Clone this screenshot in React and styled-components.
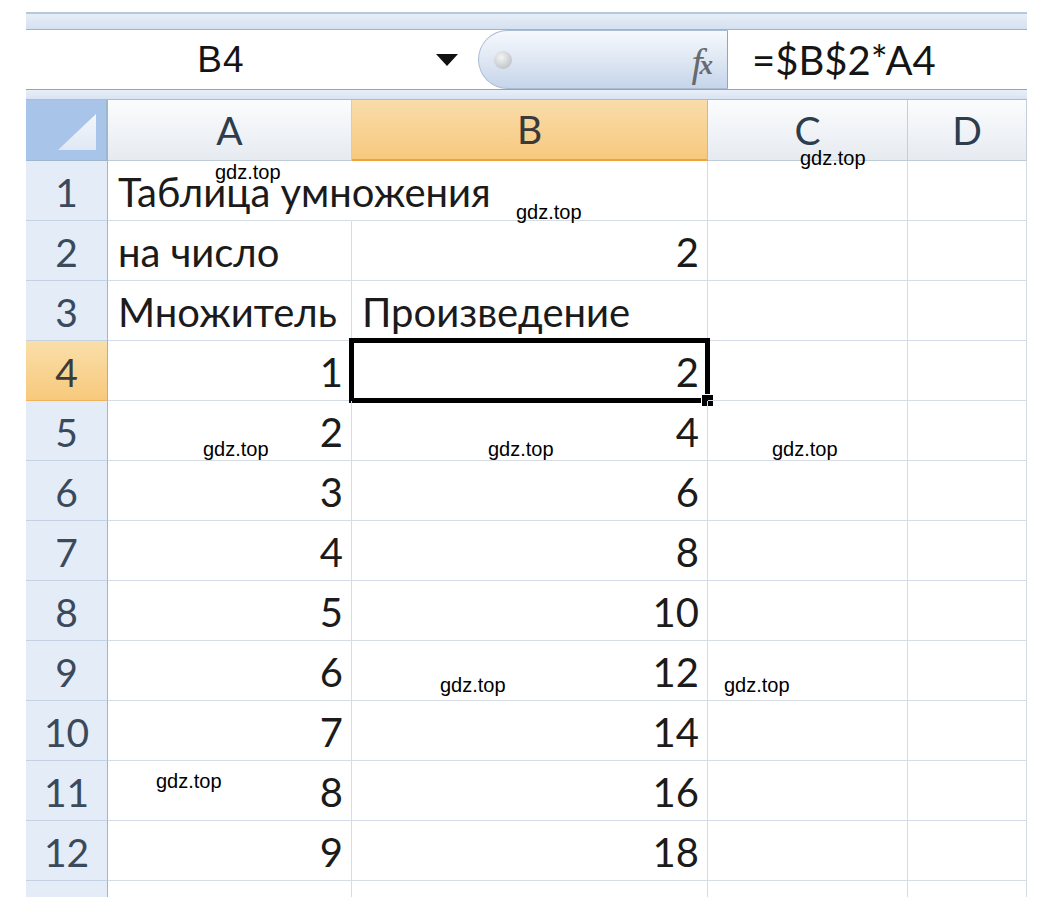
import React from 'react';
import styled, { createGlobalStyle, css } from 'styled-components';

const Global = createGlobalStyle`
  html, body { margin: 0; padding: 0; background: #fff; }
  body { overflow: hidden; }
`;

const Page = styled.div`
  position: relative;
  width: 1040px;
  height: 897px;
  overflow: hidden;
  box-sizing: border-box;
  padding: 12px 13px 0 26px;
  background: #fff;
  font-family: Lato, "Noto Sans", sans-serif;
`;

const Window = styled.div`
  display: flex;
  flex-direction: column;
  width: 1001px;
`;

const TopBand = styled.div`
  height: 18px;
  box-sizing: border-box;
  border-top: 2px solid #b6c8dc;
  border-bottom: 1px solid #9fb3cb;
  background: linear-gradient(#e6eef8, #d5e1f0);
`;

const FormulaBar = styled.div`
  display: flex;
  height: 59px;
  background: #fff;
`;

const NameBox = styled.div`
  width: 390px;
  display: flex;
  align-items: center;
  justify-content: center;
  font-family: "Liberation Sans", Arial, sans-serif;
  font-size: 37px;
  letter-spacing: 1px;
  color: #141414;
`;

const DropCell = styled.div`
  width: 62px;
  display: flex;
  align-items: center;
  justify-content: center;
`;

const FxButton = styled.div`
  position: relative;
  width: 250px;
  box-sizing: border-box;
  border-radius: 30px 0 0 30px;
  border: 1px solid #a9bcd3;
  border-right: 1px solid #8fa5c0;
  background: linear-gradient(#f6f9fd 0%, #e1e9f4 45%, #c6d5ea 100%);
  display: flex;
  align-items: center;
  justify-content: space-between;
  padding: 0 14px 0 15px;
`;

const Knob = styled.div`
  width: 18px;
  height: 18px;
  border-radius: 50%;
  background: radial-gradient(circle at 40% 35%, #f4f4f4, #c4c7cc 70%, #aeb3ba);
`;

const FxText = styled.div`
  font-family: "Liberation Serif", "DejaVu Serif", serif;
  font-style: italic;
  font-size: 40px;
  color: #66696e;
  line-height: 1;
  display: flex;
  align-items: flex-end;
  padding-top: 6px;
`;

const FxSub = styled.span`
  font-size: 27px;
  font-weight: bold;
  margin-left: -3px;
  margin-bottom: 4px;
`;

const FormulaInput = styled.div`
  flex: 1;
  display: flex;
  align-items: center;
  padding-left: 24px;
  font-size: 40px;
  color: #151515;
`;

const Separator = styled.div`
  height: 11px;
  box-sizing: border-box;
  border-top: 1px solid #8ea4bf;
  border-bottom: 1px solid #aabdd3;
  background: linear-gradient(#e8eff8, #d9e4f2);
`;

const Grid = styled.div`
  display: grid;
  grid-template-columns: 82px 244px 356px 200px 119px;
  grid-template-rows: 61px;
  grid-auto-rows: 60px;
`;

const Cell = styled.div`
  position: relative;
  box-sizing: border-box;
  display: flex;
  align-items: flex-end;
  justify-content: ${(p) => (p.$right ? 'flex-end' : 'flex-start')};
  padding: 0 8px 8px 10px;
  border-right: 1px solid ${(p) => (p.$noRight ? 'transparent' : '#d6dce5')};
  border-bottom: 1px solid #d6dce5;
  font-size: 40px;
  line-height: 40px;
  color: #1b1b1b;
  white-space: nowrap;
  z-index: ${(p) => (p.$overflow ? 1 : 0)};
`;

const RowHead = styled.div`
  box-sizing: border-box;
  display: flex;
  align-items: flex-end;
  justify-content: center;
  padding-bottom: 8px;
  font-size: 39px;
  line-height: 40px;
  color: #3a4a5c;
  border-right: 1px solid #9eb6ce;
  border-bottom: 1px solid #c3d1e3;
  background: #e4ecf7;
  ${(p) =>
    p.$active &&
    css`
      background: linear-gradient(#fadfa9, #f7c97c);
      border-right-color: #f0a33a;
      border-bottom-color: #f0b35a;
      color: #3b3b3b;
    `}
`;

const ColHead = styled.div`
  box-sizing: border-box;
  display: flex;
  align-items: flex-end;
  justify-content: center;
  padding-bottom: 10px;
  font-size: 39px;
  line-height: 40px;
  color: #2e3d4d;
  border-right: 1px solid #c5ceda;
  border-bottom: 1px solid #c0cbd8;
  background: linear-gradient(#fbfcfd, #e6ebf1);
  ${(p) =>
    p.$active &&
    css`
      background: linear-gradient(#f9dcaa, #f7c97e);
      border-right-color: #f2b25a;
      border-bottom: 2px solid #f0a33a;
      color: #3a3a3a;
    `}
`;

const Corner = styled.div`
  box-sizing: border-box;
  display: flex;
  align-items: flex-end;
  justify-content: flex-end;
  padding: 0 10px 10px 0;
  background: #a9c4e9;
  border-right: 2px solid #9eb6ce;
  border-bottom: 1px solid #9eb6ce;
`;

const Selection = styled.div`
  position: absolute;
  top: -3px;
  left: -3px;
  right: -3px;
  bottom: -3px;
  border: 5px solid #000;
  pointer-events: none;
`;

const FillHandle = styled.div`
  position: absolute;
  right: -8px;
  bottom: -8px;
  width: 11px;
  height: 11px;
  background: #000;
  outline: 1px solid #fff;
`;

const Watermark = styled.div`
  position: absolute;
  font-family: "Liberation Sans", Arial, sans-serif;
  font-size: 20px;
  line-height: 20px;
  color: #000;
  z-index: 5;
`;

const marks = [
  [215, 162],
  [516, 202],
  [800, 148],
  [203, 439],
  [488, 439],
  [772, 439],
  [440, 675],
  [724, 675],
  [156, 771],
];

const rows = [
  [{ t: 'Таблица умножения', overflow: true, noRight: true }, { t: '' }, { t: '' }, { t: '' }],
  [{ t: 'на число' }, { t: '2', r: true }, { t: '' }, { t: '' }],
  [{ t: 'Множитель' }, { t: 'Произведение' }, { t: '' }, { t: '' }],
];
for (let i = 1; i <= 9; i++) {
  rows.push([{ t: String(i), r: true }, { t: String(2 * i), r: true, sel: i === 1 }, { t: '' }, { t: '' }]);
}
rows.push([{ t: '' }, { t: '' }, { t: '' }, { t: '' }]);

function DropArrow() {
  return (
    <svg width="22" height="12" viewBox="0 0 22 12">
      <path d="M0 0 H22 L11 12 Z" fill="#111" />
    </svg>
  );
}

function CornerTriangle() {
  return (
    <svg width="38" height="36" viewBox="0 0 38 36">
      <defs>
        <linearGradient id="tri" x1="0" y1="0" x2="0" y2="1">
          <stop offset="0" stopColor="#f4f7fb" />
          <stop offset="1" stopColor="#dfe8f4" />
        </linearGradient>
      </defs>
      <path d="M38 0 V36 H0 Z" fill="url(#tri)" />
    </svg>
  );
}

export default function App() {
  return (
    <Page>
      <Global />
      <Window>
        <TopBand />
        <FormulaBar>
          <NameBox>B4</NameBox>
          <DropCell>
            <DropArrow />
          </DropCell>
          <FxButton>
            <Knob />
            <FxText>
              f<FxSub>x</FxSub>
            </FxText>
          </FxButton>
          <FormulaInput>=$B$2*A4</FormulaInput>
        </FormulaBar>
        <Separator />
        <Grid>
          <Corner>
            <CornerTriangle />
          </Corner>
          <ColHead>A</ColHead>
          <ColHead $active>B</ColHead>
          <ColHead>C</ColHead>
          <ColHead>D</ColHead>
          {rows.map((row, ri) => (
            <React.Fragment key={ri}>
              <RowHead $active={ri === 3}>{ri < 12 ? ri + 1 : ''}</RowHead>
              {row.map((c, ci) => (
                <Cell key={ci} $right={c.r} $noRight={c.noRight} $overflow={c.overflow}>
                  {c.t}
                  {c.sel && (
                    <Selection>
                      <FillHandle />
                    </Selection>
                  )}
                </Cell>
              ))}
            </React.Fragment>
          ))}
        </Grid>
      </Window>
      {marks.map(([x, y], i) => (
        <Watermark key={i} style={{ left: x, top: y }}>
          gdz.top
        </Watermark>
      ))}
    </Page>
  );
}
